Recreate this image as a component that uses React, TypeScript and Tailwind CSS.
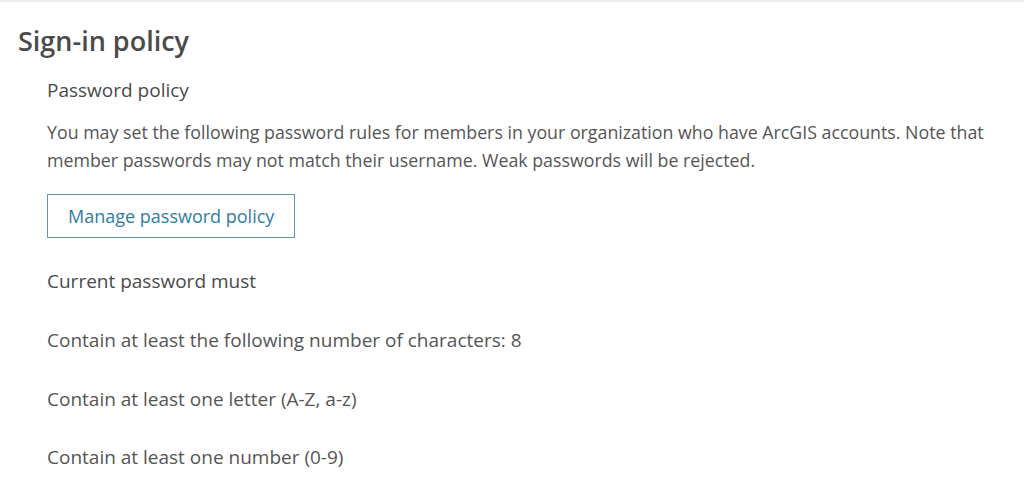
export default function App() {
  const font = { fontFamily: "'Open Sans', Lato, sans-serif" };
  return (
    <div className="w-[1024px] h-[499px] bg-white border-t-2 border-[#ececec] text-[#4a4a4a] overflow-hidden" style={font}>
      <div className="pl-[18px] pt-[22px]">
        <h1 className="text-[27px] font-semibold leading-[36px] -mt-[1px]">Sign-in policy</h1>
        <div className="pl-[29px] pr-[30px]">
          <h2 className="mt-[18px] text-[19px] font-medium leading-[26px]">Password policy</h2>
          <p className="mt-[15px] text-[17.8px] leading-[28px] text-[#555]">
            You may set the following password rules for members in your organization who have ArcGIS accounts. Note that member passwords may not match their username. Weak passwords will be rejected.
          </p>
          <button className="mt-[20px] h-[44px] px-[20px] border border-[#5a98b5] text-[#2f7ca3] text-[18px]">
            Manage password policy
          </button>
          <h3 className="mt-[30px] text-[19px] font-medium leading-[26px]">Current password must</h3>
          <div className="mt-[33px] flex flex-col gap-[32.5px] text-[19px] leading-[26px] text-[#555]">
            <div>Contain at least the following number of characters: 8</div>
            <div>Contain at least one letter (A-Z, a-z)</div>
            <div>Contain at least one number (0-9)</div>
          </div>
        </div>
      </div>
    </div>
  );
}
